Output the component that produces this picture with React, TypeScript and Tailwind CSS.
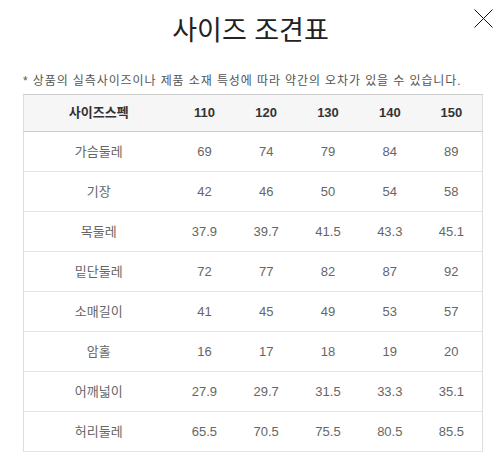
import React from 'react';

const sizes = ['110', '120', '130', '140', '150'];

const rows: { label: string; values: string[] }[] = [
  { label: '가슴둘레', values: ['69', '74', '79', '84', '89'] },
  { label: '기장', values: ['42', '46', '50', '54', '58'] },
  { label: '목둘레', values: ['37.9', '39.7', '41.5', '43.3', '45.1'] },
  { label: '밑단둘레', values: ['72', '77', '82', '87', '92'] },
  { label: '소매길이', values: ['41', '45', '49', '53', '57'] },
  { label: '암홀', values: ['16', '17', '18', '19', '20'] },
  { label: '어깨넓이', values: ['27.9', '29.7', '31.5', '33.3', '35.1'] },
  { label: '허리둘레', values: ['65.5', '70.5', '75.5', '80.5', '85.5'] },
];

export default function App() {
  return (
    <div className="relative h-[465px] w-[501px] bg-white font-['Liberation_Sans','Noto_Sans_CJK_KR',sans-serif]">
      {/* close */}
      <button className="absolute right-[8px] top-[9px] size-[19px]" aria-label="닫기">
        <svg viewBox="0 0 19 19" className="size-[19px]" stroke="#111" strokeWidth="1" fill="none">
          <path d="M0.5 0.5 18.5 18.5M18.5 0.5 0.5 18.5" />
        </svg>
      </button>

      <h1 className="pt-[13px] text-center text-[27px] leading-[36px] text-[#222]">
        사이즈 조견표
      </h1>

      <p className="mt-[24px] pl-[23px] text-[12px] leading-[16px] tracking-[0.9px] text-[#555]">
        * 상품의 실측사이즈이나 제품 소재 특성에 따라 약간의 오차가 있을 수 있습니다.
      </p>

      <table className="ml-[23px] mt-[5px] w-[460px] table-fixed border-collapse border border-[#dddddd] text-center text-[13px]">
        <colgroup>
          <col className="w-[150px]" />
          {sizes.map((s) => (
            <col key={s} />
          ))}
        </colgroup>
        <thead>
          <tr className="h-[37px] border-t border-b border-t-[#cccccc] border-b-[#cccccc] bg-[#f6f6f6]">
            <th className="font-bold text-[#333]">사이즈스펙</th>
            {sizes.map((s) => (
              <th key={s} className="font-bold text-[#333]">
                {s}
              </th>
            ))}
          </tr>
        </thead>
        <tbody>
          {rows.map((r) => (
            <tr key={r.label} className="h-[40px] border-b border-[#e5e5e5] text-[#666]">
              <td>{r.label}</td>
              {r.values.map((v, i) => (
                <td key={i}>{v}</td>
              ))}
            </tr>
          ))}
        </tbody>
      </table>
    </div>
  );
}
